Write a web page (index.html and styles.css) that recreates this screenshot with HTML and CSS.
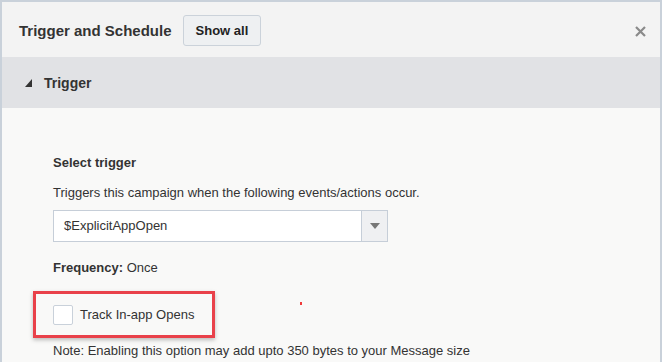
FILE: index.html
```html
<!DOCTYPE html>
<html>
<head>
  <title>Trigger and Schedule</title>
  <link rel="stylesheet" href="styles.css">
</head>
<body>
  <div class="panel">
    <div class="panel-header">
      <h1>Trigger and Schedule</h1>
      <button class="show-all">Show all</button>
      <span class="close">
        <svg width="11" height="11" viewBox="0 0 11 11"><path d="M1 1L10 10M10 1L1 10" stroke="#8a8a8a" stroke-width="2.2"/></svg>
      </span>
    </div>

    <div class="section-bar">
      <svg class="caret" width="7" height="8" viewBox="0 0 7 8"><polygon points="7,0 7,8 0,8" fill="#333"/></svg>
      <h2>Trigger</h2>
    </div>

    <div class="section-body">
      <span class="red-dot"></span>
      <div class="field-label">Select trigger</div>
      <p class="help">Triggers this campaign when the following events/actions occur.</p>

      <div class="select">
        <span class="select-value">$ExplicitAppOpen</span>
        <span class="select-arrow">
          <svg width="10" height="6" viewBox="0 0 10 6"><polygon points="0,0 10,0 5,6" fill="#777"/></svg>
        </span>
      </div>

      <div class="frequency"><b>Frequency:</b> Once</div>

      <div class="highlight">
        <label class="check-row">
          <span class="checkbox"></span>
          Track In-app Opens
        </label>
      </div>

      <p class="note">Note: Enabling this option may add upto 350 bytes to your Message size</p>
    </div>
  </div>
</body>
</html>
```

FILE: styles.css
```css
body {
  margin: 0;
  font-family: "Liberation Sans", Arial, sans-serif;
  color: #333;
  background-color: #f9f9f8;
}

.panel {
  border: 2px solid #c9d1da;
  border-bottom: none;
  height: 360px;
  overflow: hidden;
  background-color: #f9f9f8;
}

.panel-header {
  display: flex;
  align-items: center;
  height: 55px;
  padding: 2px 14px 0 17px;
  box-sizing: border-box;
  background-color: #f3f3f3;
}

.panel-header h1 {
  margin: 0;
  font-size: 15px;
  font-weight: bold;
}

.show-all {
  margin-left: 11px;
  height: 31px;
  padding: 0 12px;
  font-family: inherit;
  font-size: 13px;
  font-weight: bold;
  color: #222;
  background-color: #eef0f2;
  border: 1px solid #cbd2da;
  border-radius: 3px;
}

.close {
  margin-left: auto;
  display: flex;
  margin-top: 1px;
}

.section-bar {
  display: flex;
  align-items: center;
  height: 51px;
  padding-left: 23px;
  background-color: #e1e2e5;
}

.caret {
  margin-top: 1px;
}

.section-bar h2 {
  margin: 0 0 0 12px;
  font-size: 14px;
  font-weight: bold;
  color: #333;
}

.section-body {
  position: relative;
  padding: 46px 0 0 51px;
  font-size: 13px;
  line-height: 18px;
}

.field-label {
  font-weight: bold;
}

.help {
  margin: 12px 0 8px;
}

.select {
  display: flex;
  width: 333px;
  height: 30px;
  border: 1px solid #c6ced8;
  background-color: #fff;
}

.select-value {
  flex: 1;
  padding-left: 10px;
  line-height: 30px;
}

.select-arrow {
  width: 25px;
  display: flex;
  align-items: center;
  justify-content: center;
  border-left: 1px solid #c6ced8;
  background-color: #eff0f2;
}

.frequency {
  margin-top: 17px;
}

.highlight {
  display: inline-block;
  margin: 14px 0 0 -20px;
  padding: 11px 18px 10px 17px;
  border: 3px solid #e9414a;
  box-shadow: 0 2px 4px rgba(0, 0, 0, 0.25);
}

.check-row {
  display: flex;
  align-items: center;
}

.checkbox {
  width: 18px;
  height: 18px;
  margin-right: 7px;
  border: 1px solid #c9d1da;
  border-radius: 2px;
  background-color: #fff;
}

.note {
  margin: 4px 0 0;
}

.red-dot {
  position: absolute;
  left: 298px;
  top: 194px;
  width: 2px;
  height: 3px;
  background-color: #f03a3a;
}
```
